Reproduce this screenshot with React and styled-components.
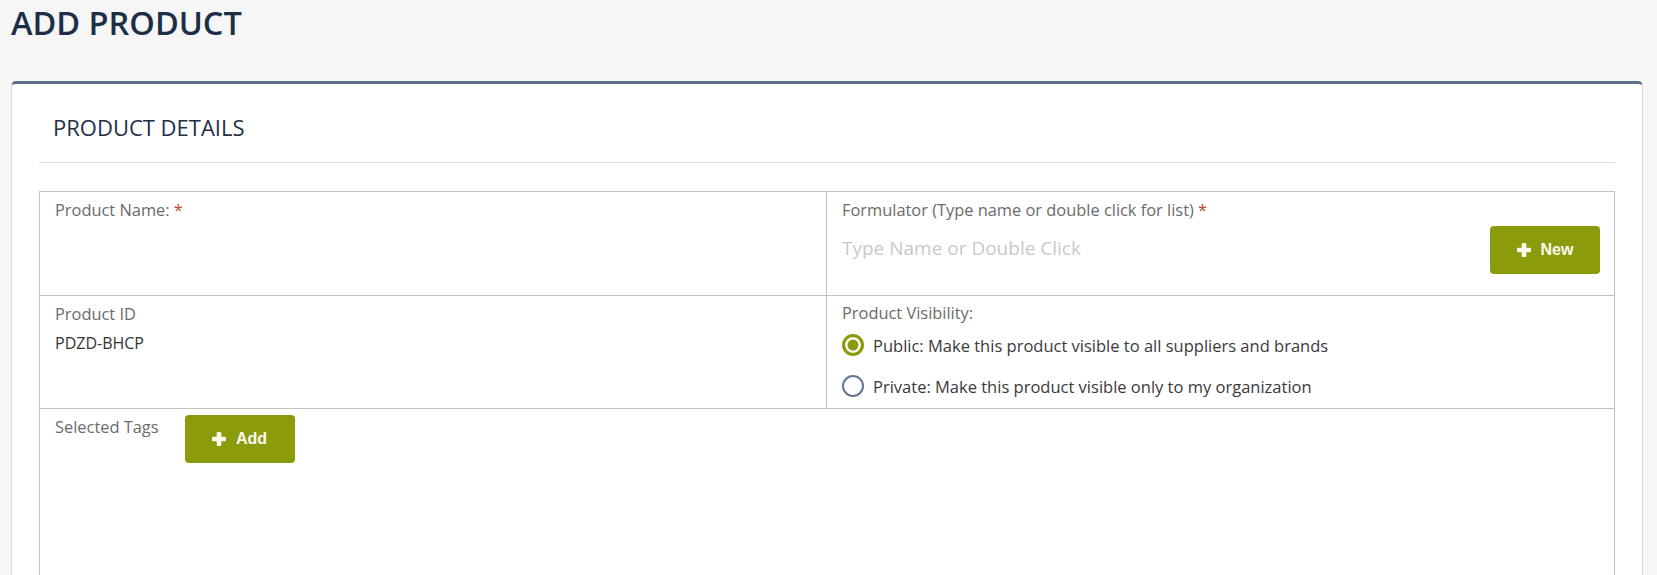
import { useState } from "react";
import styled, { createGlobalStyle } from "styled-components";

const GlobalStyle = createGlobalStyle`
  body {
    margin: 0;
    background: #f6f6f6;
    font-family: "Open Sans", "Noto Sans", sans-serif;
  }
`;

// thick bootstrap-style plus
const PlusIcon = () => (
  <svg width="14" height="14" viewBox="0 0 14 14" aria-hidden="true">
    <rect x="4.7" y="0" width="4.6" height="14" rx="1.2" fill="currentColor" />
    <rect x="0" y="4.7" width="14" height="4.6" rx="1.2" fill="currentColor" />
  </svg>
);

const AddProduct = () => {
  const [visibility, setVisibility] = useState("public");

  return (
    <Page>
      <GlobalStyle />
      <Title>ADD PRODUCT</Title>
      <Card>
        <CardHeader>
          <h2>PRODUCT DETAILS</h2>
        </CardHeader>

        <Table>
          {/* row 1 */}
          <Cell $left $pad="6px 15px">
            <Label>
              Product Name: <Req>*</Req>
            </Label>
          </Cell>
          <Cell $pad="6px 14px 21px 15px">
            <Label>
              Formulator (Type name or double click for list) <Req>*</Req>
            </Label>
            <InputRow>
              <Input placeholder="Type Name or Double Click" />
              <GreenButton>
                <PlusIcon />
                New
              </GreenButton>
            </InputRow>
          </Cell>

          {/* row 2 */}
          <Cell $left $pad="6px 15px">
            <Label>Product ID</Label>
            <Value>PDZD-BHCP</Value>
          </Cell>
          <Cell $pad="5px 15px 10px 15px">
            <Label>Product Visibility:</Label>
            <Options>
              <Option onClick={() => setVisibility("public")}>
                <Radio $checked={visibility === "public"} />
                <span>Public: Make this product visible to all suppliers and brands</span>
              </Option>
              <Option onClick={() => setVisibility("private")}>
                <Radio $checked={visibility === "private"} />
                <span>Private: Make this product visible only to my organization</span>
              </Option>
            </Options>
          </Cell>

          {/* row 3 */}
          <TagsCell>
            <Label>Selected Tags</Label>
            <GreenButton>
              <PlusIcon />
              Add
            </GreenButton>
          </TagsCell>
        </Table>
      </Card>
    </Page>
  );
};

const Page = styled.div`
  padding: 0 14px 0 11px;
`;

const Title = styled.h1`
  margin: 0;
  font-size: 32.5px;
  font-weight: 600;
  line-height: normal;
  color: #1d2f47;
`;

const Card = styled.div`
  margin-top: 36px;
  background: #fff;
  border: 1px solid #dcdcdc;
  border-top: 3px solid #5a7089;
  border-radius: 5px;
  padding: 0 27px 40px;
`;

const CardHeader = styled.div`
  padding: 32px 14px 24px;
  border-bottom: 1px solid #dedede;

  h2 {
    margin: 0;
    font-size: 22px;
    font-weight: 400;
    line-height: 1;
    color: #1f2f46;
  }
`;

const Table = styled.div`
  margin-top: 28px;
  border: 1px solid #c2c2c2;
  display: grid;
  grid-template-columns: 1fr 1fr;
`;

const Cell = styled.div`
  padding: ${(p) => p.$pad};
  border-bottom: 1px solid #c2c2c2;
  border-right: ${(p) => (p.$left ? "1px solid #c2c2c2" : "none")};
`;

const TagsCell = styled.div`
  grid-column: 1 / -1;
  display: flex;
  align-items: flex-start;
  gap: 26px;
  padding: 6px 15px;
  min-height: 200px;
`;

const Label = styled.div`
  font-size: 16.4px;
  color: #6b6b6b;
`;

const Req = styled.span`
  color: #c0452b;
`;

const Value = styled.div`
  margin-top: 7px;
  font-size: 16px;
  color: #333;
`;

const InputRow = styled.div`
  margin-top: 5px;
  display: flex;
  align-items: center;
`;

const Input = styled.input`
  flex: 1;
  border: none;
  outline: none;
  padding: 0;
  height: 26px;
  margin-top: -4px;
  font-family: inherit;
  font-size: 19px;
  color: #333;
  background: transparent;

  &::placeholder {
    color: #c9c9c9;
  }
`;

const GreenButton = styled.button`
  width: 110px;
  height: 48px;
  flex-shrink: 0;
  display: flex;
  align-items: center;
  justify-content: center;
  gap: 10px;
  border: none;
  border-radius: 4px;
  background: #8b9b0c;
  color: #fafbef;
  font-family: "Liberation Sans", Arial, sans-serif;
  font-size: 16px;
  font-weight: 700;
  cursor: pointer;
`;

const Options = styled.div`
  margin-top: 9px;
  display: flex;
  flex-direction: column;
  gap: 17px;
`;

const Option = styled.label`
  display: flex;
  align-items: center;
  gap: 9px;
  height: 24px;
  font-size: 16.5px;
  color: #3a3a3a;
  cursor: pointer;
`;

const Radio = styled.span`
  width: 22px;
  height: 22px;
  box-sizing: border-box;
  border-radius: 50%;
  flex-shrink: 0;
  border: ${(p) => (p.$checked ? "3px solid #8b9b0c" : "2px solid #62788f")};
  background: ${(p) => (p.$checked ? "#8b9b0c" : "#fff")};
  box-shadow: ${(p) => (p.$checked ? "inset 0 0 0 2.5px #fff" : "none")};
`;

export default AddProduct;
